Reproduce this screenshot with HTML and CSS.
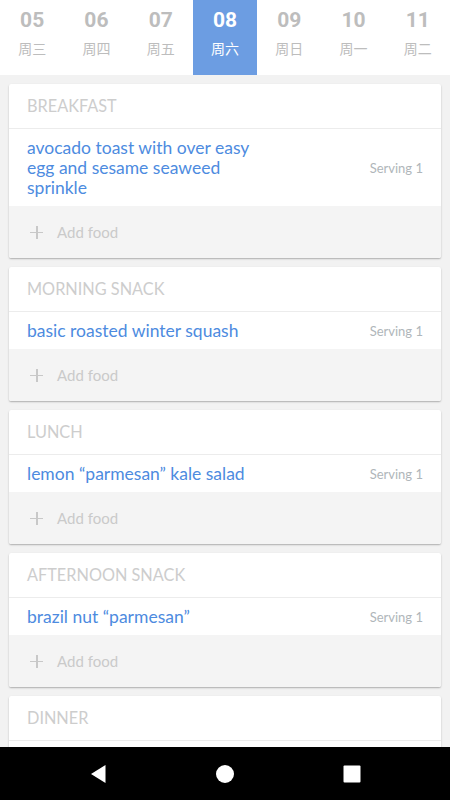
FILE: index.html
```html
<!DOCTYPE html>
<html>
<head>
<meta charset="utf-8">
<link rel="stylesheet" href="styles.css">
</head>
<body>
<div class="days">
  <div class="day"><span class="num">05</span><span class="wd">周三</span></div>
  <div class="day"><span class="num">06</span><span class="wd">周四</span></div>
  <div class="day"><span class="num">07</span><span class="wd">周五</span></div>
  <div class="day active"><span class="num">08</span><span class="wd">周六</span></div>
  <div class="day"><span class="num">09</span><span class="wd">周日</span></div>
  <div class="day"><span class="num">10</span><span class="wd">周一</span></div>
  <div class="day"><span class="num">11</span><span class="wd">周二</span></div>
</div>
<div class="list">
  <div class="card">
    <div class="head">BREAKFAST</div>
    <div class="item"><span class="name">avocado toast with over easy egg and sesame seaweed sprinkle</span><span class="serv">Serving 1</span></div>
    <div class="add"><span class="plus"></span>Add food</div>
  </div>
  <div class="card">
    <div class="head">MORNING SNACK</div>
    <div class="item"><span class="name">basic roasted winter squash</span><span class="serv">Serving 1</span></div>
    <div class="add"><span class="plus"></span>Add food</div>
  </div>
  <div class="card">
    <div class="head">LUNCH</div>
    <div class="item"><span class="name">lemon “parmesan” kale salad</span><span class="serv">Serving 1</span></div>
    <div class="add"><span class="plus"></span>Add food</div>
  </div>
  <div class="card">
    <div class="head">AFTERNOON SNACK</div>
    <div class="item"><span class="name">brazil nut “parmesan”</span><span class="serv">Serving 1</span></div>
    <div class="add"><span class="plus"></span>Add food</div>
  </div>
  <div class="card">
    <div class="head">DINNER</div>
    <div class="rest"></div>
  </div>
</div>
<div class="navbar">
  <svg width="18" height="20" viewBox="0 0 18 20"><path d="M15.5 1 L15.5 19 L1 10 Z" fill="#fff"/></svg>
  <svg width="20" height="20" viewBox="0 0 20 20"><circle cx="10" cy="10" r="9" fill="#fff"/></svg>
  <svg width="20" height="20" viewBox="0 0 20 20"><rect x="1.5" y="1.5" width="17" height="17" rx="1" fill="#fff"/></svg>
</div>
</body>
</html>
```
FILE: styles.css
```css
html, body {
  margin: 0;
  padding: 0;
  background: #f2f2f2;
  height: 800px;
  overflow: hidden;
}
body {
  font-family: Lato, "Noto Sans", sans-serif;
}
.days {
  display: grid;
  grid-template-columns: repeat(7, 1fr);
  background: #fff;
  height: 75px;
}
.day {
  display: flex;
  flex-direction: column;
  align-items: center;
  padding-top: 7px;
  color: #bdbdbd;
}
.day .num {
  font-family: Roboto, sans-serif;
  font-weight: 700;
  font-size: 21px;
  line-height: 26px;
}
.day .wd {
  font-family: "Noto Sans CJK SC", sans-serif;
  font-size: 14px;
  line-height: 20px;
  margin-top: 5px;
}
.day.active {
  background: #6c9de2;
  color: #fff;
}
.list {
  display: flex;
  flex-direction: column;
  gap: 9px;
  padding: 9px 9px 0;
}
.card {
  background: #fff;
  border-radius: 2px;
  box-shadow: 0 1px 2px rgba(0,0,0,0.22), 0 1px 1px rgba(0,0,0,0.08);
  overflow: hidden;
}
.head {
  height: 44px;
  line-height: 44px;
  padding-left: 18px;
  font-size: 16.3px;
  color: #cdcdcd;
  border-bottom: 1px solid #ececec;
}
.item {
  display: flex;
  align-items: center;
  justify-content: space-between;
  padding: 8.5px 18px;
}
.name {
  width: 240px;
  font-size: 17.5px;
  line-height: 20px;
  color: #4d8be0;
}
.serv {
  font-size: 13px;
  color: #b0b6ba;
}
.add {
  display: flex;
  align-items: center;
  height: 52px;
  background: #f4f4f4;
  padding-left: 21px;
  font-size: 15px;
  color: #cacaca;
}
.plus {
  position: relative;
  width: 13px;
  height: 13px;
  margin-right: 14px;
}
.plus::before, .plus::after {
  content: "";
  position: absolute;
  background: #c8c8c8;
}
.plus::before {
  left: 0; right: 0; top: 6px; height: 1.5px;
}
.plus::after {
  top: 0; bottom: 0; left: 6px; width: 1.5px;
}
.rest {
  height: 90px;
}
.navbar {
  position: fixed;
  left: 0;
  right: 0;
  bottom: 0;
  height: 53px;
  background: #000;
  display: flex;
  justify-content: center;
  align-items: center;
  gap: 107px;
  padding-left: 2px;
}
```
